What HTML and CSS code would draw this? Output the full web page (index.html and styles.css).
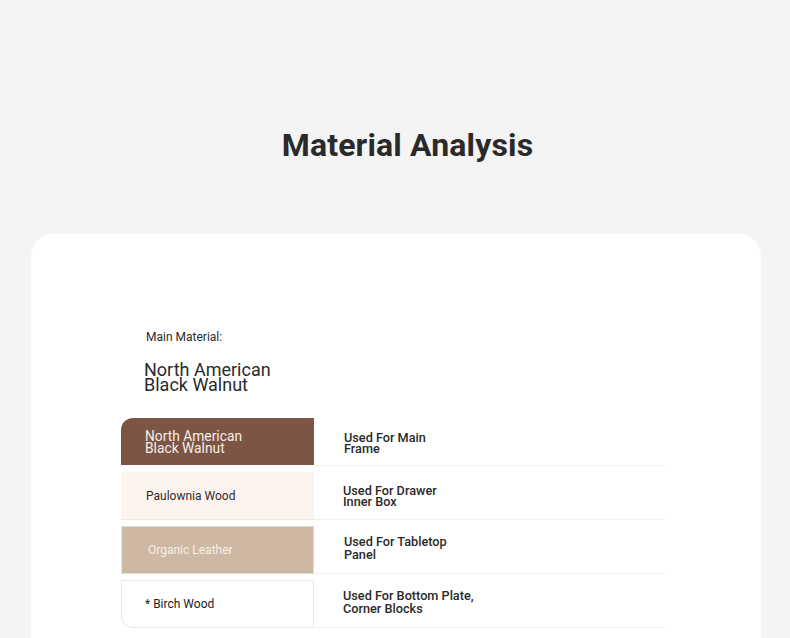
FILE: index.html
```html
<!DOCTYPE html>
<html>
<head>
<meta charset="utf-8">
<link rel="stylesheet" href="styles.css">
</head>
<body>
<h1 class="title">Material Analysis</h1>
<div class="card">
  <div class="main">
    <div class="main-label">Main Material:</div>
    <div class="main-name">North American<br>Black Walnut</div>
  </div>
  <div class="table">
    <div class="row">
      <div class="mat mat-walnut">North American<br>Black Walnut</div>
      <div class="use use-tight use-r1">Used For Main<br>Frame</div>
    </div>
    <div class="row">
      <div class="mat mat-paulownia">Paulownia Wood</div>
      <div class="use use-tight use-left">Used For Drawer<br>Inner Box</div>
    </div>
    <div class="row">
      <div class="mat mat-leather">Organic Leather</div>
      <div class="use use-up">Used For Tabletop<br>Panel</div>
    </div>
    <div class="row">
      <div class="mat mat-birch">* Birch Wood</div>
      <div class="use use-left use-up">Used For Bottom Plate,<br>Corner Blocks</div>
    </div>
  </div>
</div>
</body>
</html>
```

FILE: styles.css
```css
html, body {
  margin: 0;
  padding: 0;
  background: #f4f4f4;
  font-family: Roboto, "Liberation Sans", sans-serif;
  color: #2a2a2a;
}

.title {
  margin: 0;
  padding-top: 126px;
  font-size: 32px;
  line-height: 38px;
  font-weight: 700;
  text-align: center;
  color: #2b2a2a;
  padding-left: 25px;
  letter-spacing: 0.15px;
}

.card {
  margin: 70px 29px 0 31px;
  background: #ffffff;
  border-radius: 22px 22px 0 0;
  padding: 95px 96px 40px 90px;
  height: 400px;
}

.main {
  padding-left: 23px;
}

.main-label {
  font-size: 12px;
  line-height: 16px;
  color: #2a2a2a;
  padding-left: 2px;
}

.main-name {
  margin-top: 17px;
  font-size: 18px;
  line-height: 15px;
  color: #2a2a2a;
}

.table {
  margin-top: 26px;
  width: 544px;
  display: flex;
  flex-direction: column;
  gap: 6px;
}

.row {
  display: grid;
  grid-template-columns: 193px 1fr;
  height: 48px;
}

.mat {
  display: flex;
  align-items: center;
  padding-left: 24px;
  font-size: 12px;
  line-height: 14px;
  box-sizing: border-box;
}

.mat-walnut {
  background: #7c5544;
  color: #f6eee9;
  font-size: 13.8px;
  line-height: 12.5px;
  border-top-left-radius: 12px;
  height: 47px;
  padding-top: 1px;
}

.mat-paulownia {
  background: #fdf4f0;
  color: #2e2a28;
  border-bottom: 1px solid #efe9e6;
  padding-left: 25px;
}

.mat-leather {
  background: #cdb8a3;
  color: #f7efe6;
  padding-left: 26px;
  border: 1px solid #e3dcd5;
  border-left-color: #e8e8e8;
}

.mat-birch {
  background: #ffffff;
  color: #222;
  border: 1px solid #e6e6e6;
  border-bottom-left-radius: 12px;
  padding-left: 23px;
}

.use {
  display: flex;
  align-items: center;
  padding-left: 30px;
  font-size: 12.7px;
  font-weight: 500;
  line-height: 13px;
  color: #2a2a2a;
  border-bottom: 1px solid #f0f0f0;
}

.use-tight {
  line-height: 11px;
}

.use-r1 {
  padding-top: 2px;
}

.use-up {
  padding-bottom: 3px;
}

.use-left {
  padding-left: 29px;
}
```
